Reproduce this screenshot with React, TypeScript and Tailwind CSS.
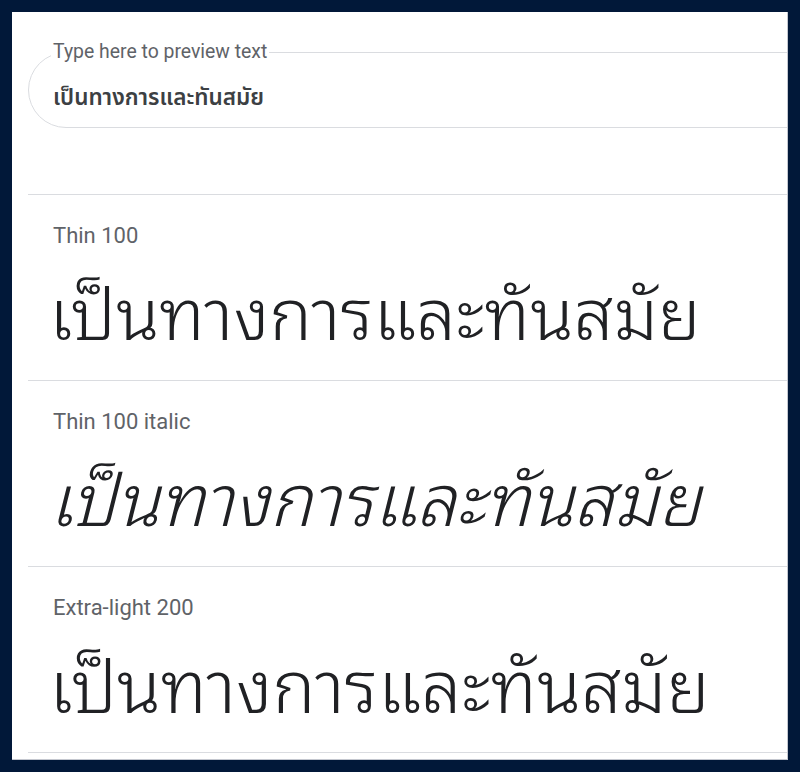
import React from "react";

const thai = "เป็นทางการและทันสมัย";

function Section({ label, italic, weight, size }: { label: string; italic?: boolean; weight: string; size: string }) {
  return (
    <div className="border-t border-[#dadce0] h-[186px] pl-[25px] pt-[27px]">
      <div className="text-[22px] leading-[28px] text-[#5f6368] font-['Roboto',sans-serif]">{label}</div>
      <div
        className={`-ml-[4px] mt-[8px] ${size} leading-[100px] text-[#202124] whitespace-nowrap font-['Noto_Sans_Thai_Looped','Noto_Sans_Thai','Noto_Sans',sans-serif] ${weight} ${italic ? "italic" : ""}`}
      >
        {thai}
      </div>
    </div>
  );
}

export default function App() {
  return (
    <div className="w-[800px] h-[772px] bg-[#011839] p-[12px] overflow-hidden">
      <div className="bg-white h-[748px] w-[776px] pl-[16px] overflow-hidden border-r border-b border-[#c4c7cf]">
        <div className="pt-[29px] h-[182px]">
          <fieldset className="border border-[#dadce0] rounded-l-[40px] h-[87px] w-[800px] pl-[22px] pr-0 m-0">
            <legend className="px-[2px] text-[19.4px] leading-[22px] text-[#5f6368] font-['Roboto',sans-serif]">
              Type here to preview text
            </legend>
            <div className="pt-[20px] text-[22.5px] leading-[30px] font-semibold text-[#3c4043] font-['Noto_Sans_Thai','Noto_Sans',sans-serif] pl-[2px]">
              {thai}
            </div>
          </fieldset>
        </div>
        <Section label="Thin 100" weight="font-[300]" size="text-[71.5px]" />
        <Section label="Thin 100 italic" weight="font-[300]" size="text-[71.5px]" italic />
        <Section label="Extra-light 200" weight="font-[350]" size="text-[72.5px]" />
        <div className="border-t border-[#dadce0]" />
      </div>
    </div>
  );
}
